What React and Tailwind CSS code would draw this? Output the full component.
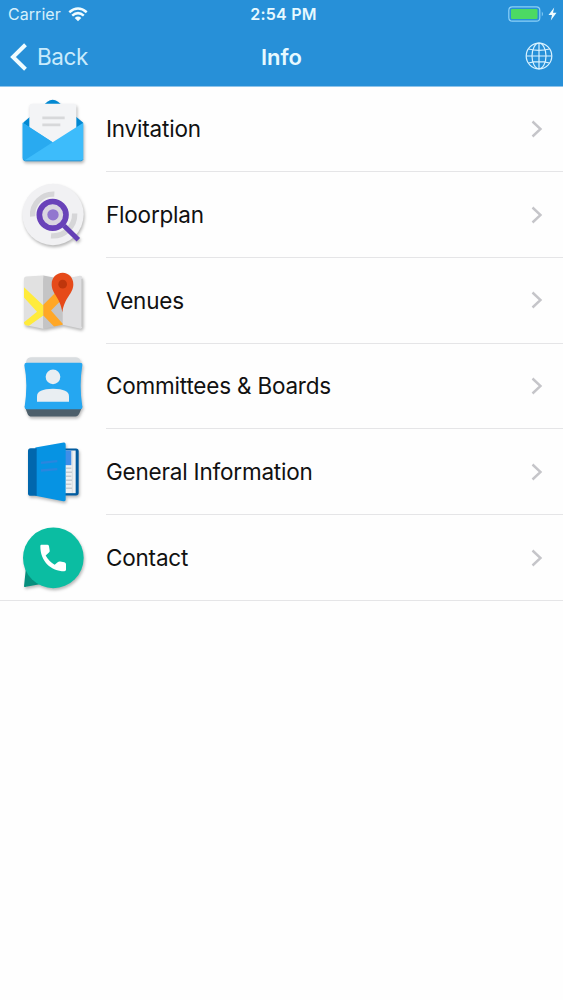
import React from 'react';

const InvitationIcon = () => (
  <svg viewBox="0 -3.5 270 240" className="w-[90px] h-20">
    <path d="M40 94 L112 32 Q128 20 144 32 L219 94 V112 H40 Z" fill="#0288d1" />
    <path d="M58 45 Q58 38 65 38 H192 Q199 38 199 45 V116 L128 158 L58 112 Z" fill="#f3f4f6" />
    <path d="M97 80 H164 M97 101 H151" stroke="#d7d8da" strokeWidth="8" />
    <path d="M38 95 L128 153 L220 95 V202 Q220 209 213 209 H45 Q38 209 38 202 Z" fill="#3dbcfb" />
    <path d="M38 95 L128 153 L43 208 Q38 206 38 200 Z" fill="#29aaf0" />
    <path d="M40 205 Q42 209 46 209 H212 Q217 209 219 205" stroke="#2196d8" strokeWidth="3" fill="none" />
  </svg>
);

const FloorplanIcon = () => (
  <svg viewBox="0 -4.5 270 240" className="w-[90px] h-20">
    <circle cx="129" cy="114" r="92" fill="#f1f1f3" />
    <path d="M68 120 A62 62 0 0 1 133 53" stroke="#d6d6d8" strokeWidth="16" fill="none" />
    <path d="M194 111 A65 65 0 0 1 123 178" stroke="#d6d6d8" strokeWidth="16" fill="none" />
    <path d="M162 148 L205 190" stroke="#6440b5" strokeWidth="15" />
    <circle cx="128" cy="115" r="32" fill="#dad6e0" />
    <circle cx="128" cy="115" r="40" stroke="#6942b9" strokeWidth="17" fill="none" />
    <circle cx="129" cy="115" r="17" fill="#9276cf" />
  </svg>
);

const VenuesIcon = () => (
  <svg viewBox="0 -5.5 270 240" className="w-[90px] h-20">
    <path d="M42 47 Q42 42 48 41 L100 38 V198 L48 187 Q42 186 42 182 Z" fill="#e1e1e1" />
    <path d="M100 38 L158 49 V186 L100 198 Z" fill="#c4c4c5" />
    <path d="M158 49 L209 39 Q217 38 217 46 V191 Q217 199 209 197 L158 186 Z" fill="#dfdfe1" />
    <path d="M42 73 L100 128 V158 L57 189 L48 187 Q42 186 42 180 V178 L81 147 L42 104 Z" fill="#ffeb3b" />
    <path d="M100 126 L139 87 L158 108 L123 143 L158 183 V186 L132 191 L100 158 Z" fill="#ffa726" />
    <path d="M216 48 V192" stroke="#bdbdbd" strokeWidth="3" />
    <path d="M158 30 C139 30 125 45 125 64 C125 93 151 103 157 148 C163 103 190 93 190 64 C190 45 176 30 158 30 Z" fill="#e64a19" />
    <circle cx="158" cy="64" r="13" fill="#bf360c" />
  </svg>
);

const CommitteesIcon = () => (
  <svg viewBox="0 -0.5 270 240" className="w-[90px] h-20">
    <path d="M44 60 L50 38 Q53 30 62 30 H197 Q207 30 210 38 L217 60 Z" fill="#d9dde0" />
    <path d="M44 177 H217 L209 197 Q205 208 196 208 H65 Q55 208 52 198 Z" fill="#4d5f6b" />
    <path d="M50 47 H210 Q218 47 217 54 Q212 83 212 115 Q212 146 217 178 Q218 186 210 186 H51 Q43 186 44 178 Q49 146 49 115 Q49 83 43 54 Q43 47 50 47 Z" fill="#25a7f1" />
    <circle cx="129" cy="89" r="22" fill="#e9eef2" />
    <path d="M81 164 V147 Q81 126 129 125 Q177 126 177 147 V164 Z" fill="#e9eef2" />
  </svg>
);

const GeneralIcon = () => (
  <svg viewBox="0 -1.5 270 240" className="w-[90px] h-20">
    <path d="M145 48 H198 Q206 48 206 56 V181 Q206 189 198 189 H145 Z" fill="#015b9f" />
    <path d="M155 54 H197 V182 H155 Z" fill="#edf0f2" />
    <path d="M165 54 H184 V98 H165 Z" fill="#3f8ee8" />
    <path d="M168 107 H184 M168 119 H186 M168 131 H184 M168 143 H186 M168 155 H184 M168 167 H186" stroke="#afb8bf" strokeWidth="3" />
    <path d="M187 56 V181" stroke="#cfd6da" strokeWidth="2" />
    <path d="M76 45 L161 30 Q167 29 167 36 V201 Q167 208 160 206 L76 190 Z" fill="#0693e3" />
    <path d="M62 47 H80 V190 H62 Q54 190 54 182 V55 Q54 47 62 47 Z" fill="#0167ad" />
    <path d="M93 91 L142 86 M93 114 L142 110" stroke="#2a86de" strokeWidth="7" />
  </svg>
);

const ContactIcon = () => (
  <svg viewBox="0 -2.5 270 240" className="w-[90px] h-20">
    <path d="M48 145 L42 202 Q43 206 48 204 L98 195 Z" fill="#078f7d" />
    <circle cx="130" cy="117" r="91" fill="#0bbda2" />
    <path d="M94 78 H112 Q116 78 117 82 L119 95 Q120 99 116 102 L107 110 Q116 127 134 138 L143 130 Q146 127 151 128 L163 130 Q168 131 168 136 V153 Q168 157 163 157 C123 157 91 127 91 82 Q91 78 94 78 Z" fill="#ffffff" />
  </svg>
);

const rows = [
  { label: 'Invitation', Icon: InvitationIcon },
  { label: 'Floorplan', Icon: FloorplanIcon },
  { label: 'Venues', Icon: VenuesIcon },
  { label: 'Committees & Boards', Icon: CommitteesIcon },
  { label: 'General Information', Icon: GeneralIcon },
  { label: 'Contact', Icon: ContactIcon },
];

const StatusBar = () => (
  <div className="grid grid-cols-3 items-center h-7 pl-2 pr-[6px]">
    <div className="flex items-center gap-[7px]">
      <span className="text-[16px] tracking-[0.05px] text-[#d5f0fc]">Carrier</span>
      <svg viewBox="0 0 20 15" className="w-5 h-[15px]" fill="none" stroke="#f0fcff" strokeWidth="2.5">
        <path d="M1.3 5.3 Q10 -2.3 18.7 5.3" />
        <path d="M4.2 8.6 Q10 3.6 15.8 8.6" />
        <path d="M6.7 11 Q10 8.1 13.3 11 L10 14.3 Z" fill="#f0fcff" stroke="none" />
      </svg>
    </div>
    <div className="pl-[2px] text-center text-[16px] font-semibold tracking-[0.25px] text-[#e6f9ff]">2:54 PM</div>
    <div className="flex items-center justify-end gap-1">
      <svg viewBox="0 0 36 16" className="w-9 h-4">
        <rect x="0.8" y="0.8" width="31" height="14.4" rx="3.5" fill="none" stroke="#8cd0f7" strokeWidth="1.2" />
        <rect x="3" y="3" width="26.5" height="10" rx="1" fill="#4cd964" />
        <path d="M33.8 5.5 Q36 8 33.8 10.5 Z" fill="#8cd0f7" />
      </svg>
      <svg viewBox="0 0 9 14" className="w-[9px] h-[14px]">
        <path d="M6.2 0.5 L0.5 8 H4 L2.8 13.5 L8.5 5.8 H5 Z" fill="#f0fcff" />
      </svg>
    </div>
  </div>
);

const NavBar = () => (
  <div className="grid grid-cols-3 items-center h-[58px] pl-[10px] pr-[10px]">
    <div className="flex items-center gap-[9px]">
      <svg viewBox="0 0 18 28" className="w-[18px] h-7" fill="none" stroke="#f0fcff" strokeWidth="4">
        <path d="M15.5 1.8 L3 14 L15.5 26.2" />
      </svg>
      <span className="text-[22.5px] tracking-[-0.4px] text-[#c9ebfc]">Back</span>
    </div>
    <div className="text-center text-[22px] font-semibold text-[#e6f9ff]">Info</div>
    <svg viewBox="0 0 28 28" className="justify-self-end w-7 h-7 mb-[2px]" fill="none" stroke="#d9f2ff" strokeWidth="1.2">
      <circle cx="14" cy="14" r="12.8" />
      <ellipse cx="14" cy="14" rx="7" ry="12.8" />
      <path d="M14 1.2 V26.8 M1.2 14 H26.8 M3.5 7 Q14 9.6 24.5 7 M3.5 21 Q14 18.4 24.5 21" />
    </svg>
  </div>
);

const App = () => (
  <div className="min-h-screen overflow-hidden bg-[#fefefe] font-['Inter','Liberation_Sans',sans-serif]">
    <header className="h-[86.8px] border-b border-[#8fc4ea] bg-[#2790d8]">
      <StatusBar />
      <NavBar />
    </header>

    <ul className="h-[514.4px] border-b border-[#e5e5e7]">
      {rows.map(({ label, Icon }, index) => (
        <li key={label} className="flex items-center h-[85.67px] pl-[10px]">
          <div className="shrink-0 drop-shadow-[1px_2px_1.5px_rgba(0,0,0,0.28)]">
            <Icon />
          </div>
          <div
            className={`flex flex-1 items-center justify-between self-stretch ml-[6px] pr-5 ${
              index < rows.length - 1 ? 'border-b border-[#e5e5e7]' : ''
            }`}
          >
            <span className="text-[22.5px] tracking-[-0.2px] text-[#111111]">{label}</span>
            <svg viewBox="0 0 12 18" className="w-3 h-[18px]" fill="none" stroke="#c5c5c9" strokeWidth="2.4">
              <path d="M1.5 1.5 L9.5 9 L1.5 16.5" />
            </svg>
          </div>
        </li>
      ))}
    </ul>
  </div>
);

export default App;
